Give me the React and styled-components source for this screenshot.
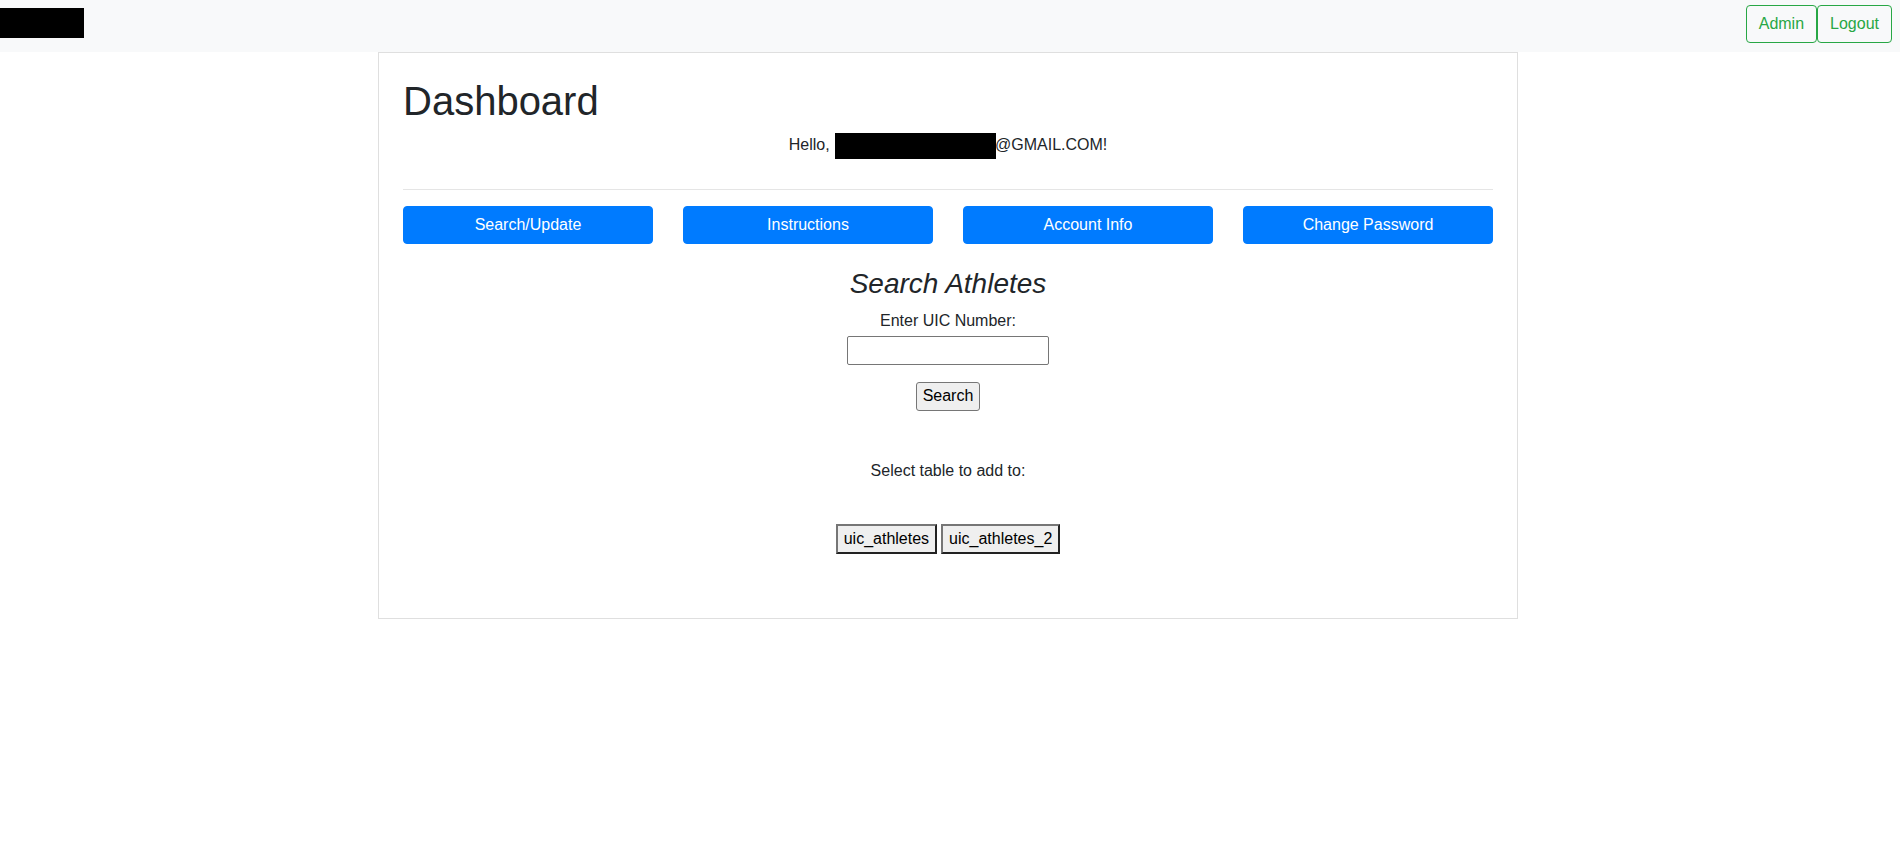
import React from "react";
import styled, { createGlobalStyle } from "styled-components";

const GlobalStyle = createGlobalStyle`
  html, body {
    margin: 0;
    padding: 0;
    background: #ffffff;
  }
  body {
    font-family: "Liberation Sans", Arial, Helvetica, sans-serif;
    font-size: 16px;
    line-height: 1.5;
    color: #212529;
  }
  *, *::before, *::after { box-sizing: border-box; }
`;

const Navbar = styled.nav`
  display: flex;
  justify-content: space-between;
  align-items: flex-start;
  height: 52px;
  background: #f8f9fa;
  padding-right: 8px;
`;

const Logo = styled.div`
  width: 84px;
  height: 30px;
  margin-top: 8px;
  background: #000000;
`;

const NavActions = styled.div`
  display: flex;
  margin-top: 5px;
`;

const OutlineButton = styled.button`
  font-family: inherit;
  font-size: 16px;
  line-height: 24px;
  height: 38px;
  padding: 6px 12px;
  color: #28a745;
  background: transparent;
  border: 1px solid #28a745;
  border-radius: 4px;
  cursor: pointer;
`;

const Main = styled.main`
  display: flex;
  justify-content: center;
  padding-right: 4px;
`;

const Card = styled.section`
  width: 1140px;
  border: 1px solid rgba(0, 0, 0, 0.125);
  padding: 24px;
  background: #ffffff;
`;

const Title = styled.h1`
  margin: 0 0 8px;
  font-size: 40px;
  font-weight: 500;
  line-height: 1.2;
`;

const Greeting = styled.p`
  margin: 0 0 32px;
  height: 24px;
  line-height: 24px;
  text-align: center;
  white-space: pre;
`;

const Redacted = styled.span`
  display: inline-block;
  width: 161px;
  height: 26px;
  margin: -2px -1px -2px 1px;
  background: #000000;
  vertical-align: middle;
`;

const Divider = styled.hr`
  margin: 0 0 16px;
  border: 0;
  border-top: 1px solid rgba(0, 0, 0, 0.1);
`;

const TabRow = styled.div`
  display: grid;
  grid-template-columns: repeat(4, 1fr);
  gap: 30px;
  margin-bottom: 23px;
`;

const PrimaryButton = styled.button`
  font-family: inherit;
  font-size: 16px;
  line-height: 24px;
  height: 38px;
  padding: 6px 12px;
  color: #ffffff;
  background: #007bff;
  border: 1px solid #007bff;
  border-radius: 4px;
  cursor: pointer;
`;

const SearchSection = styled.div`
  display: flex;
  flex-direction: column;
  align-items: center;
`;

const SectionTitle = styled.h3`
  margin: 0 0 8px;
  font-size: 28px;
  font-style: italic;
  font-weight: 500;
  line-height: 1.2;
`;

const Label = styled.label`
  display: block;
  line-height: 24px;
`;

const TextInput = styled.input`
  width: 202px;
  height: 29px;
  margin-top: 3px;
  padding: 1px 2px;
  font-family: inherit;
  font-size: 16px;
  border: 1px solid #767676;
  border-radius: 2px;
  background: #ffffff;
`;

const PlainButton = styled.button`
  height: 29px;
  margin-top: 17px;
  padding: 0 6px;
  font-family: inherit;
  font-size: 16px;
  line-height: 24px;
  color: #000000;
  background: #efefef;
  border: 1px solid #767676;
  border-radius: 3px;
  cursor: pointer;
`;

const SelectText = styled.p`
  margin: 48px 0 0;
  line-height: 24px;
`;

const TableChoices = styled.div`
  display: flex;
  gap: 4px;
  margin: 41px 0 40px;
`;

const TableButton = styled.button`
  height: 30px;
  padding: 1px 6px;
  font-family: inherit;
  font-size: 16px;
  line-height: 24px;
  color: #000000;
  background: #efefef;
  border-style: solid;
  border-width: 2px;
  border-color: #767676 #222222 #222222 #767676;
  border-radius: 0;
  cursor: pointer;
`;

const tabs = ["Search/Update", "Instructions", "Account Info", "Change Password"];
const tables = ["uic_athletes", "uic_athletes_2"];

export default function App() {
  return (
    <>
      <GlobalStyle />
      <Navbar>
        <Logo />
        <NavActions>
          <OutlineButton>Admin</OutlineButton>
          <OutlineButton>Logout</OutlineButton>
        </NavActions>
      </Navbar>
      <Main>
        <Card>
          <Title>Dashboard</Title>
          <Greeting>
            {"Hello, "}
            <Redacted />
            {"@GMAIL.COM!"}
          </Greeting>
          <Divider />
          <TabRow>
            {tabs.map((t) => (
              <PrimaryButton key={t}>{t}</PrimaryButton>
            ))}
          </TabRow>
          <SearchSection>
            <SectionTitle>Search Athletes</SectionTitle>
            <Label htmlFor="uic">Enter UIC Number:</Label>
            <TextInput id="uic" type="text" />
            <PlainButton>Search</PlainButton>
            <SelectText>Select table to add to:</SelectText>
            <TableChoices>
              {tables.map((t) => (
                <TableButton key={t}>{t}</TableButton>
              ))}
            </TableChoices>
          </SearchSection>
        </Card>
      </Main>
    </>
  );
}
